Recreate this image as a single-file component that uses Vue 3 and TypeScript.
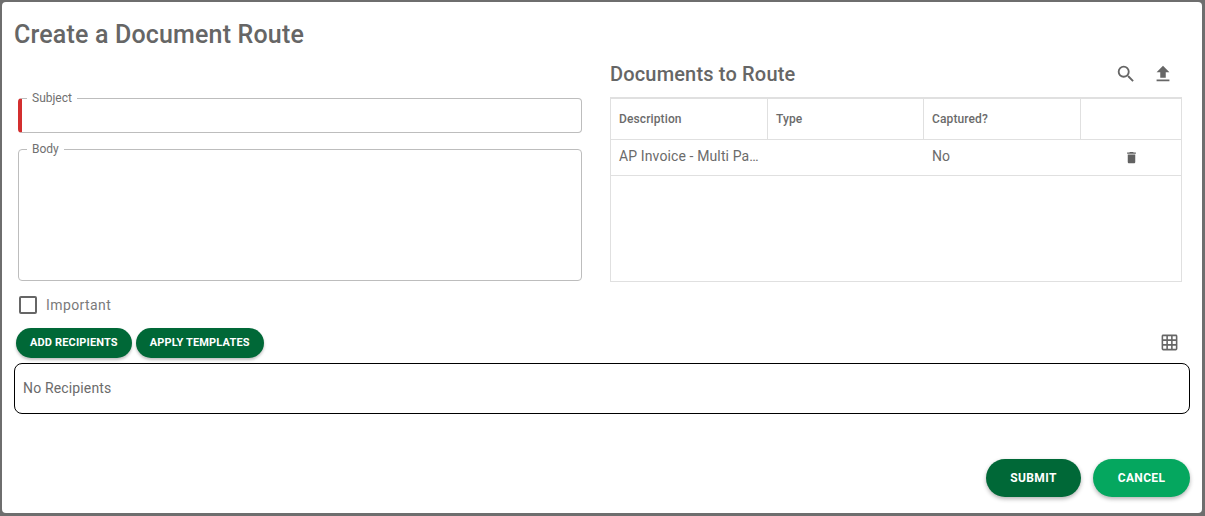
<script setup lang="ts">
const columns: string[] = ['Description', 'Type', 'Captured?', '']
</script>

<template>
  <div class="page">
    <div class="dialog">
      <h1 class="title">Create a Document Route</h1>
      <div class="columns">
        <div class="left">
          <fieldset class="field subject">
            <legend>Subject</legend>
          </fieldset>
          <fieldset class="field body-field">
            <legend>Body</legend>
          </fieldset>
          <label class="check">
            <span class="box"></span>
            <span>Important</span>
          </label>
        </div>
        <div class="right">
          <div class="doc-head">
            <h2>Documents to Route</h2>
            <div class="tools">
              <svg viewBox="0 0 24 24" width="22" height="22"><path d="M15.5 14h-.79l-.28-.27A6.47 6.47 0 0 0 16 9.5 6.5 6.5 0 1 0 9.5 16c1.61 0 3.09-.59 4.23-1.57l.27.28v.79l5 4.99L20.49 19l-4.99-5zm-6 0C7.01 14 5 11.99 5 9.5S7.01 5 9.5 5 14 7.01 14 9.5 11.99 14 9.5 14z"/></svg>
              <svg viewBox="0 0 24 24" width="22" height="22"><path d="M9 16h6v-6h4l-7-7-7 7h4zm-4 2h14v2H5z"/></svg>
            </div>
          </div>
          <div class="table">
            <div class="row head">
              <div v-for="c in columns" :key="c" class="cell">{{ c }}</div>
            </div>
            <div class="row data">
              <div class="cell">AP Invoice - Multi Pa…</div>
              <div class="cell"></div>
              <div class="cell">No</div>
              <div class="cell icon-cell">
                <svg viewBox="0 0 24 24" width="15" height="15"><path d="M6 19c0 1.1.9 2 2 2h8c1.1 0 2-.9 2-2V7H6v12zM19 4h-3.5l-1-1h-5l-1 1H5v2h14V4z"/></svg>
              </div>
            </div>
          </div>
        </div>
      </div>
      <div class="actions-row">
        <div class="pills">
          <button class="pill">ADD RECIPIENTS</button>
          <button class="pill">APPLY TEMPLATES</button>
        </div>
        <svg class="grid-icon" viewBox="0 0 24 24" width="19" height="19"><path d="M20 2H4c-1.1 0-2 .9-2 2v16c0 1.1.9 2 2 2h16c1.1 0 2-.9 2-2V4c0-1.1-.9-2-2-2zM8 20H4v-4h4v4zm0-6H4v-4h4v4zm0-6H4V4h4v4zm6 12h-4v-4h4v4zm0-6h-4v-4h4v4zm0-6h-4V4h4v4zm6 12h-4v-4h4v4zm0-6h-4v-4h4v4zm0-6h-4V4h4v4z"/></svg>
      </div>
      <div class="recipients">No Recipients</div>
      <div class="footer">
        <button class="big submit">SUBMIT</button>
        <button class="big cancel">CANCEL</button>
      </div>
    </div>
  </div>
</template>

<style>
html, body { margin: 0; background: #6e6e6e; }
</style>

<style scoped>
.page {
  width: 1205px;
  height: 516px;
  padding: 2px 3px 3px 2px;
  box-sizing: border-box;
  background: #6e6e6e;
  font-family: Roboto, sans-serif;
  overflow: hidden;
}
.dialog {
  height: 511px;
  box-sizing: border-box;
  background: #fff;
  border-radius: 4px;
  padding: 0 12px;
  display: flex;
  flex-direction: column;
}
.title {
  margin: 17px 0 0;
  font-size: 25px;
  line-height: 32px;
  font-weight: 500;
  color: #666;
  letter-spacing: 0.17px;
}
.columns {
  display: flex;
  gap: 28px;
  padding: 0 8px 0 4px;
  margin-top: 5px;
}
.left { width: 564px; display: flex; flex-direction: column; padding-top: 36px; box-sizing: border-box; }
.right { width: 572px; }
.field {
  margin: 0;
  padding: 0 0 0 8px;
  border: 1px solid #bdbdbd;
  border-radius: 4px;
  box-sizing: border-box;
  min-width: 0;
  flex: none;
}
.field legend {
  font-size: 12px;
  line-height: 12px;
  color: #707070;
  padding: 0 5px;
}
.subject {
  height: 41px;
  border-left: 4px solid #d32f2f;
  padding-left: 5px;
}
.body-field {
  height: 138px;
  margin-top: 10px;
}
.check {
  display: flex;
  align-items: center;
  gap: 9px;
  margin: 15px 0 0 1px;
  font-size: 14px;
  letter-spacing: 0.4px;
  color: #7a7a7a;
  height: 18px;
}
.box {
  width: 18px;
  height: 18px;
  box-sizing: border-box;
  border: 2px solid #666;
  border-radius: 2px;
}
.doc-head {
  display: flex;
  align-items: center;
  justify-content: space-between;
  height: 28px;
  margin-top: 4px;
}
.doc-head h2 {
  margin: 0;
  font-size: 20px;
  line-height: 28px;
  font-weight: 500;
  color: #666;
  letter-spacing: 0.17px;
}
.tools {
  display: flex;
  gap: 15px;
  padding-right: 8px;
  fill: #666;
}
.tools svg { display: block; }
.table {
  margin-top: 9px;
  height: 185px;
  box-sizing: border-box;
  border: 1px solid #e0e0e0;
  border-top-width: 2px;
}
.row {
  display: grid;
  grid-template-columns: 157px 156px 157px 1fr;
  border-bottom: 1px solid #e0e0e0;
}
.head { height: 41px; box-sizing: border-box; font-size: 12px; font-weight: 500; color: #6b6b6b; letter-spacing: 0.12px; }
.head .cell { border-right: 1px solid #e0e0e0; }
.head .cell:last-child { border-right: 0; }
.data { height: 36px; box-sizing: border-box; font-size: 14px; color: #6b6b6b; letter-spacing: 0.12px; }
.cell {
  display: flex;
  align-items: center;
  padding: 0 8px;
  min-width: 0;
}
.data .cell { padding-bottom: 4px; box-sizing: border-box; white-space: nowrap; }
.data .icon-cell { justify-content: center; fill: #616161; padding-top: 3px; padding-bottom: 2px; padding-right: 7px; }
.icon-cell svg { position: relative; top: -1px; }
.actions-row {
  display: flex;
  align-items: center;
  justify-content: space-between;
  height: 30px;
  margin-top: 14px;
  padding-left: 2px;
}
.pills { display: flex; gap: 4px; }
.pill {
  height: 30px;
  border: 0;
  border-radius: 15px;
  padding: 0 14px 2px;
  background: #006837;
  color: #fff;
  font-family: Roboto, sans-serif;
  font-size: 11px;
  font-weight: 700;
  letter-spacing: 0.15px;
  box-shadow: 0 2px 3px rgba(0,0,0,.25);
}
.grid-icon { fill: #666; margin: 0 11px 1px 0; }
.recipients {
  margin-top: 5px;
  height: 51px;
  width: 1176px;
  box-sizing: border-box;
  border: 1px solid #000;
  border-radius: 8px;
  display: flex;
  align-items: center;
  padding: 0 0 2px 8px;
  font-size: 14px;
  letter-spacing: 0.15px;
  color: #6b6b6b;
}
.footer {
  display: flex;
  justify-content: flex-end;
  gap: 12px;
  margin-top: 45px;
}
.big {
  height: 38px;
  border: 0;
  border-radius: 19px;
  color: #fff;
  font-family: Roboto, sans-serif;
  font-size: 12px;
  font-weight: 700;
  letter-spacing: .35px;
  box-shadow: 0 2px 4px rgba(0,0,0,.3);
}
.submit { width: 95px; background: #006837; }
.cancel { width: 97px; background: #05a75f; }
</style>
